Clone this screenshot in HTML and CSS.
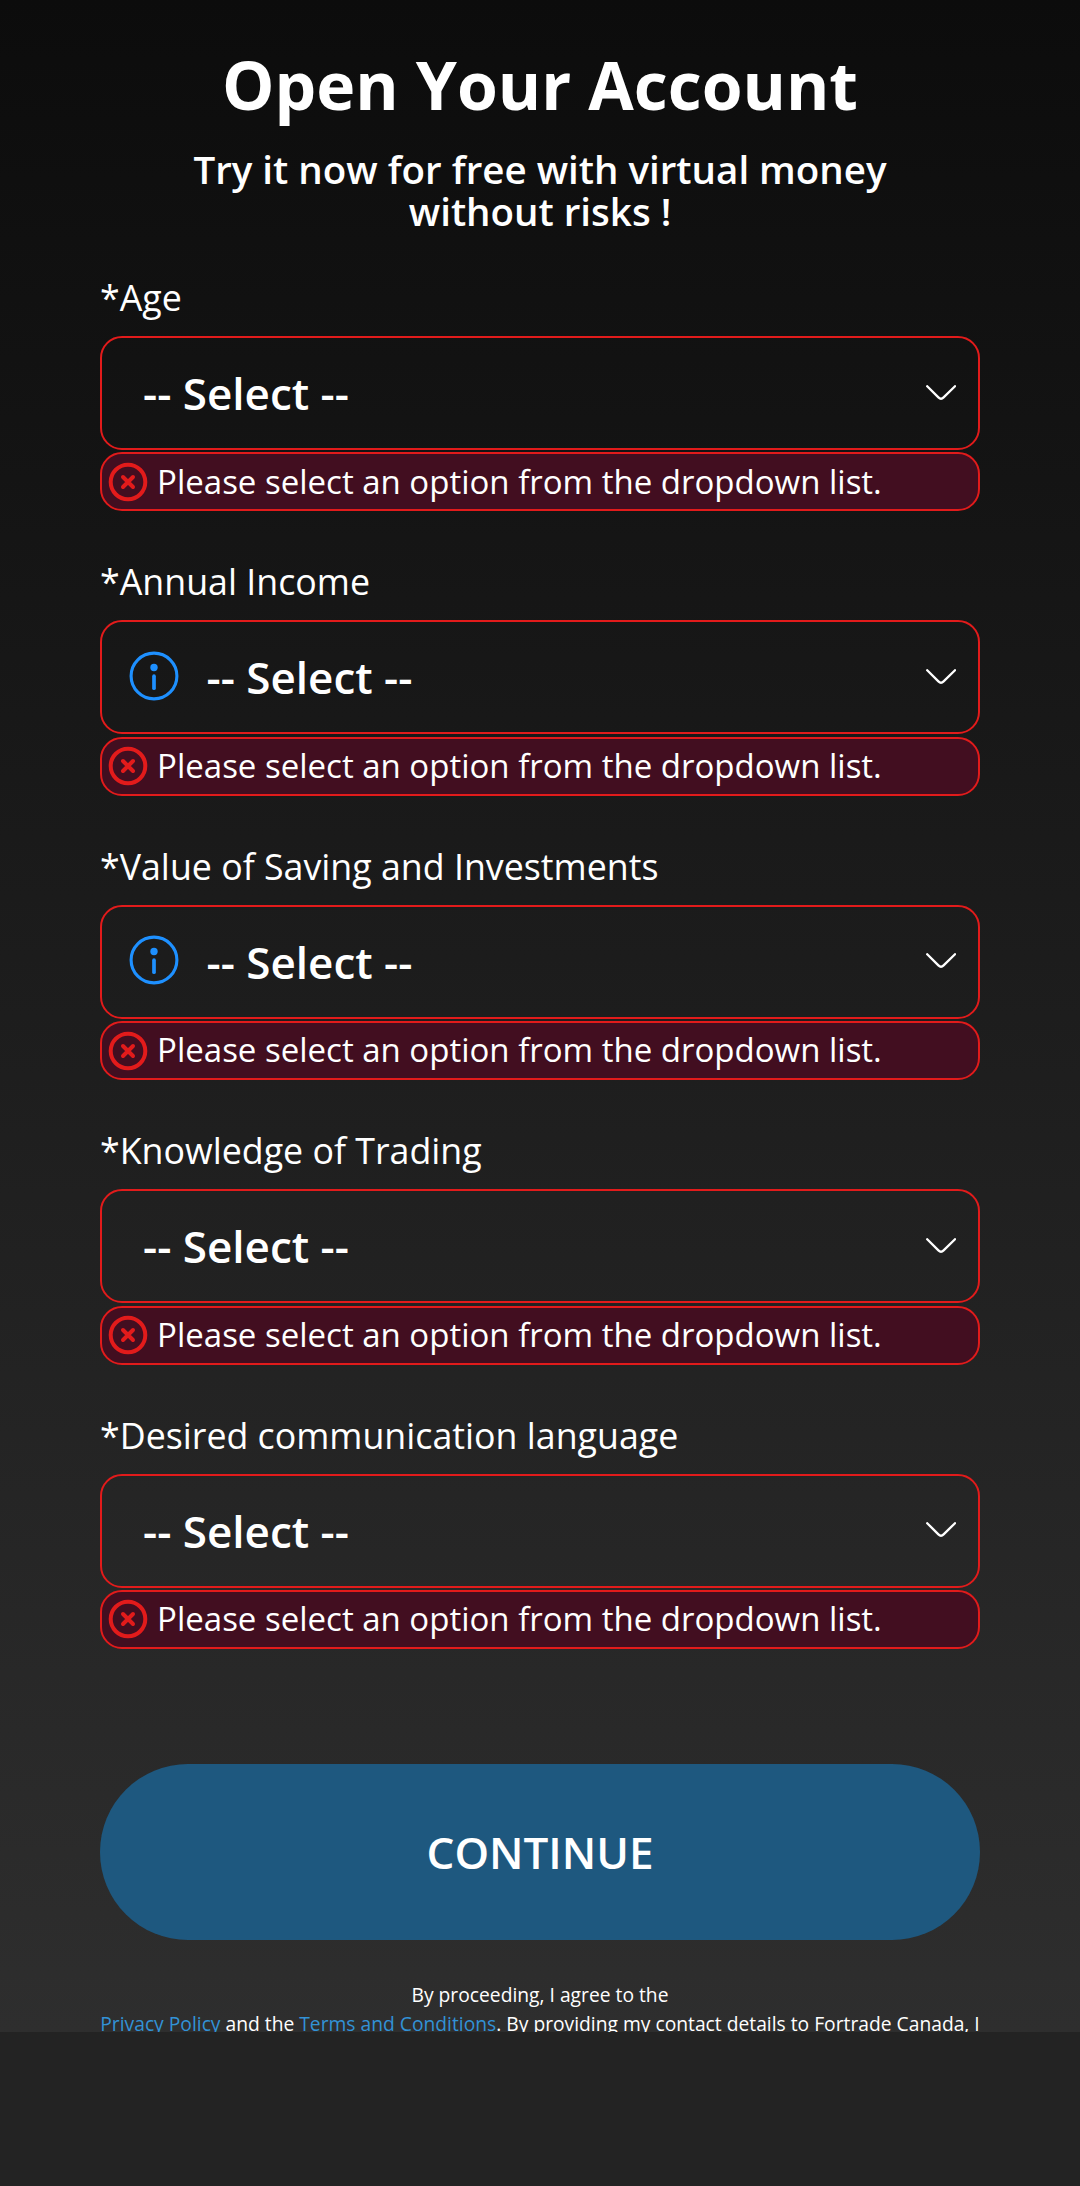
FILE: index.html
```html
<!DOCTYPE html>
<html lang="en">
<head>
<meta charset="utf-8">
<title>Open Your Account</title>
<link rel="stylesheet" href="styles.css">
</head>
<body>
<svg class="sprite" aria-hidden="true">
  <symbol id="chevron" viewBox="0 0 30 16"><path d="M1.2 1.2 12.4 12.4Q15 15 17.600 12.400L29 1.200" fill="none" stroke="#fff" stroke-width="2.300" stroke-linecap="round"/></symbol>
  <symbol id="info" viewBox="0 0 50 50"><circle cx="25" cy="25" r="22.900" fill="none" stroke="#1e90ff" stroke-width="3.100"/><circle cx="25" cy="16.500" r="3.700" fill="#1e90ff"/><path d="M25 25.200v12" stroke="#1e90ff" stroke-width="3.700" stroke-linecap="round"/></symbol>
  <symbol id="error" viewBox="0 0 40 40"><circle cx="20" cy="20" r="17.300" fill="none" stroke="#e21b1b" stroke-width="4"/><path d="m15 15 10 10m0-10-10 10" stroke="#e21b1b" stroke-width="4" stroke-linecap="round"/></symbol>
</svg>
<main class="panel">
  <h1 class="title">Open Your Account</h1>
  <p class="subtitle">Try it now for free with virtual money<br>without risks !</p>
  <form class="fields">
    <div class="field">
      <div class="label">*Age</div>
      <div class="select"><span class="value">-- Select --</span><svg class="chevron"><use href="#chevron"/></svg></div>
      <div class="error"><svg class="error-icon"><use href="#error"/></svg><span class="message">Please select an option from the dropdown list.</span></div>
    </div>
    <div class="field">
      <div class="label">*Annual Income</div>
      <div class="select has-info"><svg class="info"><use href="#info"/></svg><span class="value">-- Select --</span><svg class="chevron"><use href="#chevron"/></svg></div>
      <div class="error"><svg class="error-icon"><use href="#error"/></svg><span class="message">Please select an option from the dropdown list.</span></div>
    </div>
    <div class="field">
      <div class="label">*Value of Saving and Investments</div>
      <div class="select has-info"><svg class="info"><use href="#info"/></svg><span class="value">-- Select --</span><svg class="chevron"><use href="#chevron"/></svg></div>
      <div class="error"><svg class="error-icon"><use href="#error"/></svg><span class="message">Please select an option from the dropdown list.</span></div>
    </div>
    <div class="field">
      <div class="label">*Knowledge of Trading</div>
      <div class="select"><span class="value">-- Select --</span><svg class="chevron"><use href="#chevron"/></svg></div>
      <div class="error"><svg class="error-icon"><use href="#error"/></svg><span class="message">Please select an option from the dropdown list.</span></div>
    </div>
    <div class="field">
      <div class="label">*Desired communication language</div>
      <div class="select"><span class="value">-- Select --</span><svg class="chevron"><use href="#chevron"/></svg></div>
      <div class="error"><svg class="error-icon"><use href="#error"/></svg><span class="message">Please select an option from the dropdown list.</span></div>
    </div>
    <button class="continue" type="button">CONTINUE</button>
  </form>
  <p class="legal">By proceeding, I agree to the<br><a class="link">Privacy Policy</a> and the <a class="link">Terms and Conditions</a>. By providing my contact details to Fortrade Canada, I</p>
</main>
</body>
</html>
```
FILE: styles.css
```css
* { box-sizing: border-box; }
body {
  margin: 0;
  min-height: 2186px;
  background: #232323;
  color: #fff;
  font-family: "Open Sans", sans-serif;
}
.sprite { display: none; }
.panel {
  height: 2032px;
  padding: 39px 100px 0;
  overflow: hidden;
  background: linear-gradient(#0c0c0c, #2e2e2e);
}
.title {
  margin: 0;
  font-size: 66px;
  line-height: 91px;
  font-weight: 700;
  text-align: center;
}
.subtitle {
  margin: 18px 0 0;
  font-size: 38.5px;
  line-height: 42px;
  font-weight: 600;
  text-align: center;
}
.fields { display: flex; flex-direction: column; }
.field { height: 284.4px; }
.field:first-child { margin-top: 41px; }
.label { height: 63px; font-size: 35.75px; line-height: 49px; }
.select {
  display: flex;
  align-items: center;
  height: 114px;
  padding: 0 22px 0 41px;
  border: 2px solid #e21b1b;
  border-radius: 22px;
}
.has-info { padding-left: 27px; }
.info { width: 50px; height: 50px; margin: -3px 27.5px 0 0; }
.value { font-size: 44px; font-weight: 600; line-height: 60px; }
.chevron { width: 30px; height: 16px; margin: -1px 0 0 auto; }
.error {
  display: flex;
  align-items: center;
  height: 59px;
  margin-top: 2.33px;
  padding-left: 6.4px;
  border: 2px solid #e21b1b;
  border-radius: 22px;
  background: #420e20;
  font-size: 33px;
  line-height: 46px;
  white-space: nowrap;
}
.error-icon { width: 40px; height: 40px; margin-right: 8.7px; }
.message { margin-top: -0.4px; }
.continue {
  height: 176px;
  margin-top: 69px;
  padding: 0;
  border: 0;
  border-radius: 88px;
  background: #1e587f;
  color: #fff;
  font: 600 44px/60px "Open Sans", sans-serif;
}
.legal {
  margin: 40px 0 0;
  font-size: 19.25px;
  line-height: 29px;
  text-align: center;
  white-space: nowrap;
}
.link { color: #3292d6; }
```
